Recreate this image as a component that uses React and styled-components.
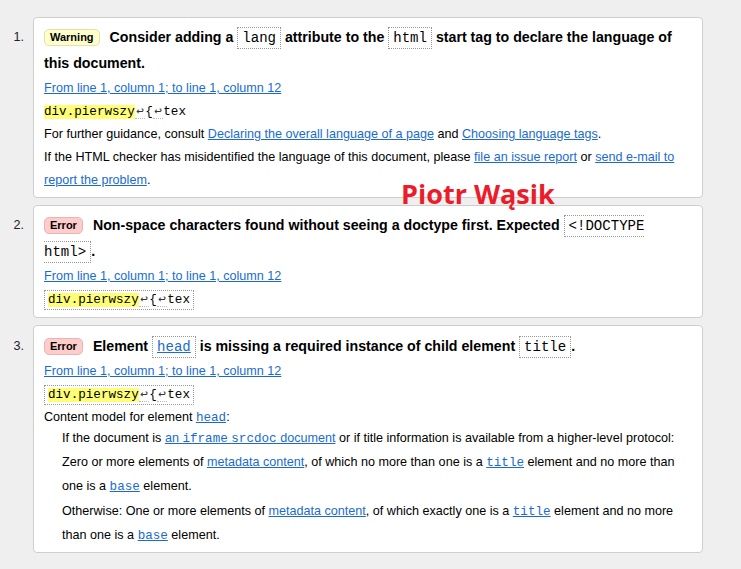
import React from "react";
import styled, { createGlobalStyle } from "styled-components";

const GlobalStyle = createGlobalStyle`
  body {
    margin: 0;
    background: #efefef;
    font-family: "Liberation Sans", Arial, sans-serif;
    font-size: 12.6px;
    color: #000;
  }
`;

const Page = styled.div`
  position: relative;
  padding: 17px 38px 17px 0;
`;

const List = styled.ol`
  margin: 0;
  padding: 0;
  list-style: none;
`;

const Item = styled.li`
  display: flex;
  align-items: flex-start;
  margin-bottom: 7px;
`;

const Number = styled.span`
  flex: 0 0 33px;
  box-sizing: border-box;
  padding: ${props => (props.top || 6) + 1}px 9px 0 0;
  text-align: right;
  line-height: 26px;
  color: #222;
`;

const Card = styled.div`
  flex: 1;
  min-width: 0;
  background: #fff;
  border: 1px solid #cfcfcf;
  border-radius: 4px;
  padding: ${props => props.top || 6}px 11px ${props => props.bottom || 5}px
    10px;
  line-height: 23px;
`;

const Title = styled.p`
  margin: 0;
  font-size: 14.2px;
  font-weight: bold;
  line-height: 26px;
`;

const Badge = styled.span`
  display: inline-block;
  font-size: 11px;
  font-weight: bold;
  line-height: 15px;
  padding: 0 5px;
  margin-right: 10px;
  border-radius: 5px;
  border: 1px solid ${props => (props.kind === "error" ? "#e9b4b4" : "#e4e0a8")};
  background: ${props => (props.kind === "error" ? "#ffcccc" : "#ffffcc")};
  vertical-align: 1px;
`;

const Code = styled.code`
  font-family: "Liberation Mono", "Courier New", monospace;
  font-size: 0.99em;
  font-weight: normal;
  line-height: 1;
  border: 1px dotted #999;
  padding: 2px 4px;
`;

const Link = styled.a`
  color: #1a6bd0;
  text-decoration: underline;
`;

const CodeLink = styled(Link)`
  font-family: "Liberation Mono", "Courier New", monospace;
  font-size: 1em;
  font-weight: normal;
  line-height: 1;
`;

const Location = styled.p`
  margin: 1px 0 0;
`;

const Extract = styled.p`
  margin: 0;
  line-height: 23px;
`;

const ExtractCode = styled.code`
  font-family: "Liberation Mono", "Courier New", monospace;
  font-size: 1em;
  line-height: 1;
  border: ${props => (props.framed ? "1px dotted #999" : "none")};
  padding: ${props => (props.framed ? "2px 3px" : "0")};
`;

const Mark = styled.b`
  font-weight: normal;
  background: #ffff77;
`;

const LineFeed = styled.span`
  display: inline-block;
  width: 10.5px;
  line-height: 12px;
  text-align: center;
  border-bottom: 1px dotted #bbb;
  color: #333;
`;

const Text = styled.p`
  margin: 0;
`;

const Model = styled.dl`
  margin: -3px 0 0 0;
  line-height: 24px;
`;

const ModelItem = styled.dd`
  margin: ${props => (props.first ? "0" : "1px")} 0 0 18px;
`;

const Signature = styled.div`
  position: absolute;
  left: 401px;
  top: 174px;
  font-family: "Open Sans", sans-serif;
  font-weight: 700;
  font-size: 27px;
  color: #ec1c2a;
  line-height: 40px;
`;

const Snippet = ({ framed }) => (
  <Extract>
    <ExtractCode framed={framed}>
      <Mark>div.pierwszy</Mark>
      <LineFeed>↩</LineFeed>{"{"}
      <LineFeed>↩</LineFeed>tex
    </ExtractCode>
  </Extract>
);

const Where = () => (
  <Location>
    <Link href="#">From line 1, column 1; to line 1, column 12</Link>
  </Location>
);

export default function App() {
  return (
    <Page>
      <GlobalStyle />
      <List>
        <Item>
          <Number>1.</Number>
          <Card>
            <Title>
              <Badge kind="warning">Warning</Badge>Consider adding a{" "}
              <Code>lang</Code> attribute to the <Code>html</Code> start tag to
              declare the language of this document.
            </Title>
            <Where />
            <Snippet />
            <Text>
              For further guidance, consult{" "}
              <Link href="#">Declaring the overall language of a page</Link> and{" "}
              <Link href="#">Choosing language tags</Link>.
            </Text>
            <Text>
              If the HTML checker has misidentified the language of this
              document, please <Link href="#">file an issue report</Link> or{" "}
              <Link href="#">send e-mail to report the problem</Link>.
            </Text>
          </Card>
        </Item>
        <Item>
          <Number>2.</Number>
          <Card bottom={6}>
            <Title>
              <Badge kind="error">Error</Badge>Non-space characters found
              without seeing a doctype first. Expected{" "}
              <Code>{"<!DOCTYPE html>"}</Code>.
            </Title>
            <Where />
            <Snippet framed />
          </Card>
        </Item>
        <Item>
          <Number top={7}>3.</Number>
          <Card top={7} bottom={5}>
            <Title>
              <Badge kind="error">Error</Badge>Element{" "}
              <Code>
                <CodeLink href="#">head</CodeLink>
              </Code>{" "}
              is missing a required instance of child element{" "}
              <Code>title</Code>.
            </Title>
            <Where />
            <Snippet framed />
            <Text>
              Content model for element <CodeLink href="#">head</CodeLink>:
            </Text>
            <Model>
              <ModelItem first>
                If the document is{" "}
                <Link href="#">
                  an <CodeLink as="span">iframe</CodeLink>{" "}
                  <CodeLink as="span">srcdoc</CodeLink> document
                </Link>{" "}
                or if title information is available from a higher-level
                protocol:
                <br />
                Zero or more elements of <Link href="#">metadata content</Link>,
                of which no more than one is a{" "}
                <CodeLink href="#">title</CodeLink> element and no more than one
                is a <CodeLink href="#">base</CodeLink> element.
              </ModelItem>
              <ModelItem>
                Otherwise: One or more elements of{" "}
                <Link href="#">metadata content</Link>, of which exactly one is a{" "}
                <CodeLink href="#">title</CodeLink> element and no more than one
                is a <CodeLink href="#">base</CodeLink> element.
              </ModelItem>
            </Model>
          </Card>
        </Item>
      </List>
      <Signature>Piotr Wąsik</Signature>
    </Page>
  );
}
